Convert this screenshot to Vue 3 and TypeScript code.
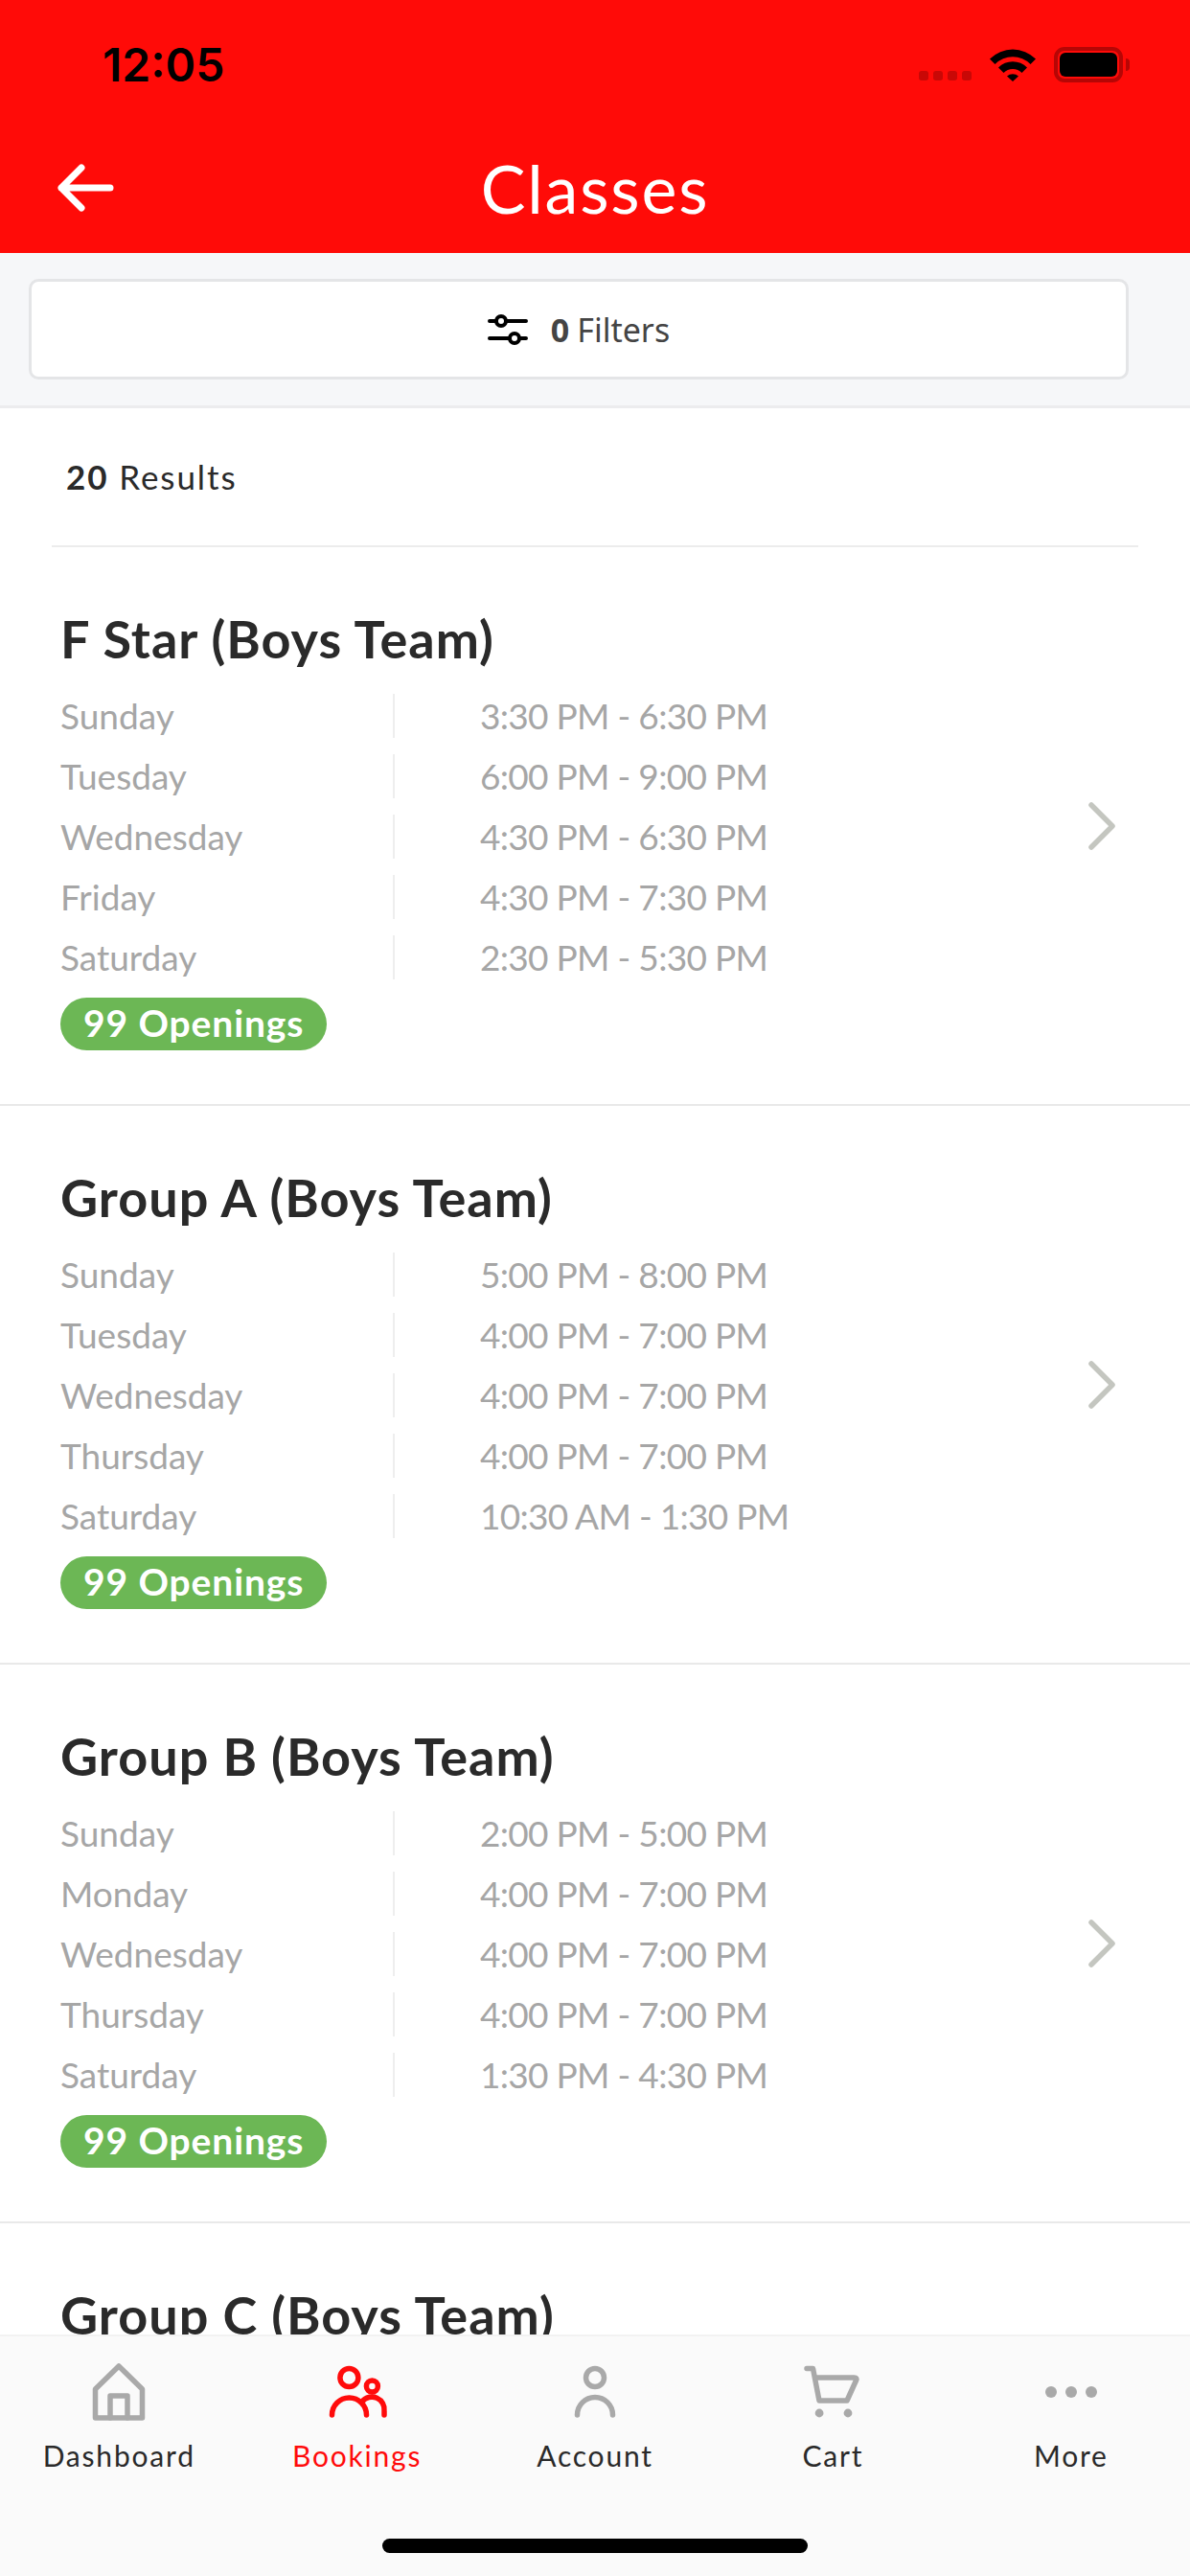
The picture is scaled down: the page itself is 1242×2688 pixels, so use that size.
<template>
  <div class="screen">
    <header class="top">
      <div class="status">
        <span class="clock">12:05</span>
        <div class="status-icons">
          <span class="signal"><i></i><i></i><i></i><i></i></span>
          <svg class="wifi" width="48" height="36" viewBox="0 0 48 36">
            <path d="M0 12.500 A34 34 0 0 1 48 12.500 L42.500 18 A26 26 0 0 0 5.500 18 Z" />
            <path d="M9 21.500 A21 21 0 0 1 39 21.500 L33.500 27 A13.500 13.500 0 0 0 14.500 27 Z" />
            <path d="M18 30.500 A9 9 0 0 1 30 30.500 L24 36 Z" />
          </svg>
          <div class="battery">
            <div class="battery-fill"></div>
            <span class="battery-cap"></span>
          </div>
        </div>
      </div>
      <div class="nav">
        <svg class="back" width="62" height="52" viewBox="0 0 62 52" fill="none">
          <path d="M26 5 L5 26 L26 47 M5 26 H56" stroke="#fff" stroke-width="7" stroke-linecap="round" stroke-linejoin="round" />
        </svg>
        <span class="nav-title">Classes</span>
      </div>
    </header>

    <div class="filter-wrap">
      <div class="filter-btn">
        <svg width="42" height="32" viewBox="0 0 42 32" fill="none" stroke="#000" stroke-width="4" stroke-linecap="round">
          <path d="M2 7 H9 M19 7 H40 M2 25 H23 M33 25 H40" />
          <circle cx="14" cy="7" r="5" />
          <circle cx="28" cy="25" r="5" />
        </svg>
        <span class="filter-text"><b>0</b><span>Filters</span></span>
      </div>
    </div>

    <main class="list">
      <div class="results"><div class="results-inner"><b>20</b> Results</div></div>

      <section v-for="c in classes" :key="c.name" class="card">
        <div class="card-body">
          <h2 class="card-title">{{ c.name }}</h2>
          <div v-for="row in c.rows" :key="row[0]" class="row">
            <span class="day">{{ row[0] }}</span>
            <span class="time">{{ row[1] }}</span>
          </div>
          <span v-if="c.rows.length" class="badge">99 Openings</span>
        </div>
        <svg v-if="c.rows.length" class="chevron" width="30" height="52" viewBox="0 0 30 52" fill="none">
          <path d="M4 4 L26 26 L4 48" stroke="#c4c6c0" stroke-width="5.500" stroke-linecap="round" stroke-linejoin="round" />
        </svg>
      </section>
    </main>

    <footer class="tabbar">
      <div v-for="t in tabs" :key="t.label" class="tab" :class="{ active: t.active }">
        <svg class="tab-icon" width="64" height="64" viewBox="0 0 64 64" fill="none" stroke-width="5.500" stroke-linecap="round" stroke-linejoin="round">
          <template v-if="t.icon === 'home'">
            <path d="M32 5 L56.500 29 V59 H7.500 V29 Z" />
            <path d="M23 59 V36 H41 V59" />
          </template>
          <template v-else-if="t.icon === 'people'">
            <circle cx="23.400" cy="17" r="9.500" />
            <circle cx="47.400" cy="26" r="6" />
            <path d="M5.500 56 A18 18 0 0 1 41.500 56" />
            <path d="M37 42 A13 13 0 0 1 60 52 V56" />
          </template>
          <template v-else-if="t.icon === 'person'">
            <circle cx="32" cy="17" r="9.500" />
            <path d="M13.500 56 A18.500 18.500 0 0 1 50.500 56" />
          </template>
          <template v-else-if="t.icon === 'cart'">
            <path d="M5 7.500 H11.500 L18 41 H47 L56.500 20 Q58 17 54.500 17 H14" />
            <circle class="solid" cx="18.100" cy="54" r="4.400" />
            <circle class="solid" cx="48" cy="54" r="4.400" />
          </template>
          <template v-else>
            <circle class="solid" cx="11" cy="32" r="6" />
            <circle class="solid" cx="32" cy="32" r="6" />
            <circle class="solid" cx="53" cy="32" r="6" />
          </template>
        </svg>
        <span class="tab-label">{{ t.label }}</span>
      </div>
      <div class="home-bar"></div>
    </footer>
  </div>
</template>

<script setup lang="ts">
type ClassItem = { name: string; rows: [string, string][] }

const classes: ClassItem[] = [
  {
    name: 'F Star (Boys Team)',
    rows: [
      ['Sunday', '3:30 PM - 6:30 PM'],
      ['Tuesday', '6:00 PM - 9:00 PM'],
      ['Wednesday', '4:30 PM - 6:30 PM'],
      ['Friday', '4:30 PM - 7:30 PM'],
      ['Saturday', '2:30 PM - 5:30 PM'],
    ],
  },
  {
    name: 'Group A (Boys Team)',
    rows: [
      ['Sunday', '5:00 PM - 8:00 PM'],
      ['Tuesday', '4:00 PM - 7:00 PM'],
      ['Wednesday', '4:00 PM - 7:00 PM'],
      ['Thursday', '4:00 PM - 7:00 PM'],
      ['Saturday', '10:30 AM - 1:30 PM'],
    ],
  },
  {
    name: 'Group B (Boys Team)',
    rows: [
      ['Sunday', '2:00 PM - 5:00 PM'],
      ['Monday', '4:00 PM - 7:00 PM'],
      ['Wednesday', '4:00 PM - 7:00 PM'],
      ['Thursday', '4:00 PM - 7:00 PM'],
      ['Saturday', '1:30 PM - 4:30 PM'],
    ],
  },
  {
    name: 'Group C (Boys Team)',
    rows: [],
  },
]

const tabs = [
  { label: 'Dashboard', icon: 'home', active: false },
  { label: 'Bookings', icon: 'people', active: true },
  { label: 'Account', icon: 'person', active: false },
  { label: 'Cart', icon: 'cart', active: false },
  { label: 'More', icon: 'more', active: false },
]
</script>

<style scoped>
.screen {
  position: relative;
  width: 1242px;
  height: 2688px;
  overflow: hidden;
  background: #fff;
  font-family: Lato, "Noto Sans", sans-serif;
}
.top { height: 264px; background: #ff0b08; }
.status {
  height: 132px;
  display: flex;
  justify-content: space-between;
  padding: 40px 70px 0 107px;
  box-sizing: border-box;
}
.clock {
  font-family: Inter, "Liberation Sans", sans-serif;
  font-weight: 600;
  font-size: 48px;
  line-height: 56px;
  color: #000;
}
.status-icons { display: flex; align-items: flex-start; height: 40px; margin-top: 9px; }
.signal { display: flex; gap: 5px; margin-top: 25px; margin-right: 19px; }
.signal i { width: 10px; height: 10px; border-radius: 3px; background: #c90806; }
.wifi { fill: #000; margin-right: 19px; }
.battery {
  position: relative;
  width: 72px;
  height: 37px;
  box-sizing: border-box;
  border: 4px solid #b60605;
  border-radius: 11px;
  padding: 2px;
}
.battery-fill { height: 100%; background: #000; border-radius: 6px; }
.battery-cap {
  position: absolute;
  right: -11px;
  top: 8px;
  width: 4px;
  height: 13px;
  background: #b60605;
  border-radius: 0 4px 4px 0;
}
.nav {
  position: relative;
  height: 132px;
  display: flex;
  align-items: center;
  justify-content: center;
}
.back { position: absolute; left: 59px; top: 38px; }
.nav-title { color: #fff; font-size: 70px; line-height: 70px; letter-spacing: 1.800px; margin-top: -4px; }
.filter-wrap {
  height: 162px;
  padding: 27px 64px 0 30px;
  box-sizing: border-box;
  background: #f6f7f9;
  border-bottom: 3px solid #ececee;
}
.filter-btn {
  height: 105px;
  box-sizing: border-box;
  background: #fff;
  border: 3px solid #e4e5e7;
  border-radius: 10px;
  display: flex;
  align-items: center;
  justify-content: center;
  gap: 24px;
}
.filter-text { display: flex; gap: 8px; font-family: "Noto Sans", sans-serif; font-size: 34px; color: #444; }
.filter-text b { font-weight: 700; }
.results { padding: 0 54px; }
.results-inner {
  height: 145px;
  line-height: 142px;
  box-sizing: border-box;
  border-bottom: 2px solid #ececec;
  padding-left: 15px;
  font-size: 35px;
  letter-spacing: 1.900px;
  color: #2a2a2a;
}
.card {
  position: relative;
  height: 583px;
  box-sizing: border-box;
  padding: 62px 0 0 63px;
  border-bottom: 2px solid #e9e9e9;
  display: flex;
}
.card-title {
  margin: 0 0 14px;
  font-size: 54px;
  line-height: 68px;
  font-weight: 700;
  letter-spacing: 1px;
  color: #2a2a2a;
}
.row { display: flex; height: 63px; align-items: center; font-size: 37px; color: #a6a6a6; }
.day {
  width: 349px;
  height: 46px;
  line-height: 46px;
  border-right: 2px solid #eeeeee;
  box-sizing: border-box;
  margin-right: 89px;
}
.time { letter-spacing: -0.700px; }
.badge {
  display: inline-block;
  margin-top: 11px;
  height: 55px;
  line-height: 53px;
  padding: 0 24px;
  background: #6cb755;
  color: #fff;
  font-size: 39px;
  font-weight: 700;
  letter-spacing: 0.900px;
  border-radius: 28px;
}
.chevron { position: absolute; left: 1135px; top: 265px; }
.tabbar {
  position: absolute;
  left: 0;
  right: 0;
  bottom: 0;
  height: 252px;
  box-sizing: border-box;
  background: #fafafa;
  border-top: 2px solid #f2f2f2;
  display: flex;
  padding-top: 26px;
}
.tab {
  flex: 1;
  display: flex;
  flex-direction: column;
  align-items: center;
  color: #2a2a2a;
  stroke: #a9a9a9;
}
.tab.active { color: #ff0b0b; stroke: #ff0b0b; }
.solid { fill: #a9a9a9; stroke: none; }
.tab-label { font-size: 30px; letter-spacing: 1.800px; line-height: 40px; margin-top: 14px; }
.home-bar {
  position: absolute;
  left: 399px;
  bottom: 24px;
  width: 444px;
  height: 15px;
  border-radius: 8px;
  background: #000;
}
</style>
